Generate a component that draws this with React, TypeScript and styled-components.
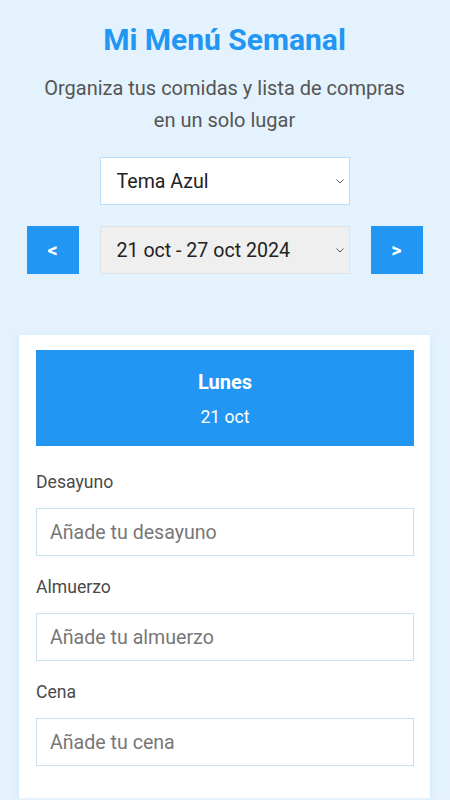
import React from "react";
import styled, { createGlobalStyle } from "styled-components";

const GlobalStyle = createGlobalStyle`
  body {
    margin: 0;
    background: #e3f2fd;
    font-family: Roboto, "Noto Sans", sans-serif;
  }
`;

//#region Styles
const Page = styled.div`
  padding: 22px 20px 0 19px;
  display: flex;
  flex-direction: column;
  align-items: center;
`;

const Title = styled.h1`
  margin: 0;
  font-size: 30px;
  line-height: 36px;
  font-weight: 700;
  color: #2196f3;
  text-align: center;
`;

const Subtitle = styled.p`
  margin: 14px 0 0;
  font-size: 20px;
  line-height: 32px;
  color: #555;
  text-align: center;
  max-width: 372px;
`;

const SelectWrap = styled.div`
  position: relative;
  width: 250px;
  height: 48px;
`;

const Select = styled.select<{ $muted?: boolean }>`
  appearance: none;
  width: 100%;
  height: 100%;
  padding: 0 30px 0 16px;
  font-family: inherit;
  font-size: 19.6px;
  color: #222;
  background: ${(p) => (p.$muted ? "#efefef" : "#fff")};
  border: 1px solid ${(p) => (p.$muted ? "#dde3e8" : "#bbdefb")};
  border-radius: 0;
  outline: none;
`;

const Chevron = styled.svg`
  position: absolute;
  right: 6px;
  top: 50%;
  width: 8px;
  height: 5px;
  margin-top: -2px;
  pointer-events: none;
`;

const ThemeWrap = styled(SelectWrap)`
  margin-top: 21px;
`;

const WeekRow = styled.div`
  margin-top: 21px;
  display: flex;
  align-items: center;
  gap: 21px;
`;

const NavButton = styled.button`
  width: 52px;
  height: 48px;
  border: none;
  background: #2196f3;
  color: #fff;
  font-family: inherit;
  font-size: 20px;
  font-weight: 700;
  cursor: pointer;
`;

const Card = styled.section`
  margin-top: 61px;
  align-self: stretch;
  background: #fff;
  padding: 15px 16px 32px 17px;
  box-shadow: 0 2px 8px rgba(33, 150, 243, 0.12);
`;

const DayHeader = styled.div`
  background: #2196f3;
  color: #fff;
  text-align: center;
  padding: 20px 0 18px;
  margin-bottom: 25px;
`;

const DayName = styled.h3`
  margin: 0 0 12px;
  font-size: 20px;
  line-height: 24px;
  font-weight: 700;
`;

const DayDate = styled.p`
  margin: 0;
  font-size: 17.6px;
  line-height: 22px;
`;

const MealGroup = styled.div`
  display: flex;
  flex-direction: column;
  & + & {
    margin-top: 20px;
  }
`;

const MealLabel = styled.label`
  font-size: 17.6px;
  line-height: 22px;
  color: #4a4a4a;
  margin-bottom: 15px;
`;

const MealInput = styled.input`
  box-sizing: border-box;
  height: 48px;
  padding: 0 13px;
  font-family: inherit;
  font-size: 19.6px;
  border: 1px solid #c9e1ec;
  outline: none;
  &::placeholder {
    color: #777;
  }
`;
//#endregion

const MEALS = [
  { id: "desayuno", label: "Desayuno", placeholder: "Añade tu desayuno" },
  { id: "almuerzo", label: "Almuerzo", placeholder: "Añade tu almuerzo" },
  { id: "cena", label: "Cena", placeholder: "Añade tu cena" },
];

const Arrow = () => (
  <Chevron viewBox="0 0 8 5">
    <path d="M0.5 0.5 L4 4 L7.5 0.5" fill="none" stroke="#555" strokeWidth="1" />
  </Chevron>
);

export default function App() {
  const [theme, setTheme] = React.useState("azul");
  const [week, setWeek] = React.useState("w43");

  return (
    <>
      <GlobalStyle />
      <Page>
        <Title>Mi Menú Semanal</Title>
        <Subtitle>Organiza tus comidas y lista de compras en un solo lugar</Subtitle>
        <ThemeWrap>
          <Select value={theme} onChange={(e) => setTheme(e.target.value)}>
            <option value="azul">Tema Azul</option>
            <option value="verde">Tema Verde</option>
            <option value="rosa">Tema Rosa</option>
          </Select>
          <Arrow />
        </ThemeWrap>
        <WeekRow>
          <NavButton type="button">&lt;</NavButton>
          <SelectWrap>
            <Select $muted value={week} onChange={(e) => setWeek(e.target.value)}>
              <option value="w43">21 oct - 27 oct 2024</option>
              <option value="w44">28 oct - 3 nov 2024</option>
            </Select>
            <Arrow />
          </SelectWrap>
          <NavButton type="button">&gt;</NavButton>
        </WeekRow>
        <Card>
          <DayHeader>
            <DayName>Lunes</DayName>
            <DayDate>21 oct</DayDate>
          </DayHeader>
          {MEALS.map((meal) => (
            <MealGroup key={meal.id}>
              <MealLabel htmlFor={meal.id}>{meal.label}</MealLabel>
              <MealInput id={meal.id} type="text" placeholder={meal.placeholder} />
            </MealGroup>
          ))}
        </Card>
      </Page>
    </>
  );
}
